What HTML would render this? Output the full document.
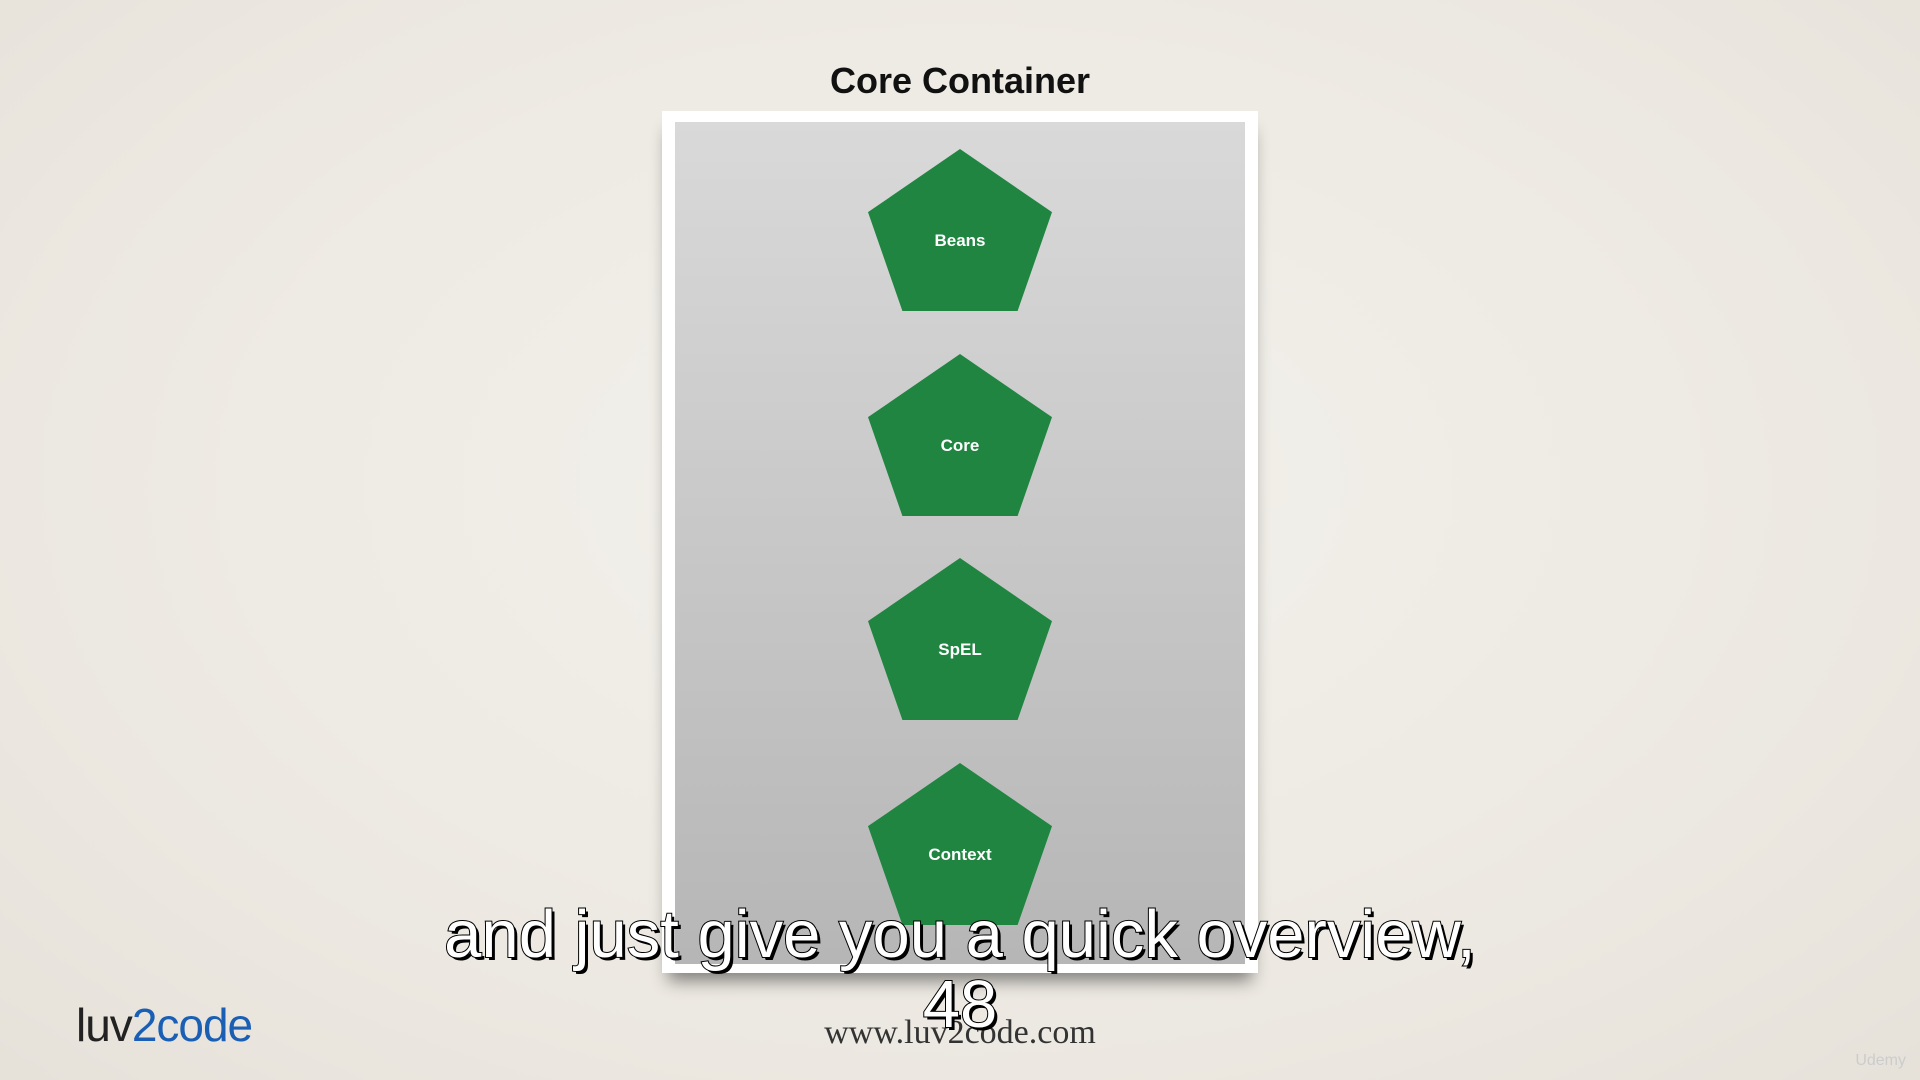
<!DOCTYPE html>
<html><head><meta charset="utf-8"><style>
html,body{margin:0;padding:0}
body{width:1920px;height:1080px;overflow:hidden;position:relative;background:radial-gradient(ellipse at 50% 45%,#f3f1ec 0%,#ece8e1 70%,#e6e2da 100%);font-family:"Liberation Sans",sans-serif}
.title{position:absolute;left:0;width:1920px;top:60px;text-align:center;font-weight:bold;font-size:36px;color:#111}
.frame{position:absolute;left:662px;top:111px;width:596px;height:862px;background:#fff;box-shadow:0 14px 16px -6px rgba(0,0,0,.45)}
.inner{position:absolute;left:13px;top:11px;width:570px;height:842px;background:linear-gradient(#d9d9d9,#b6b6b6)}
.pent{position:absolute;left:193px;width:184px;height:162px;background:#1f8541;clip-path:polygon(50% 0,100% 39%,81.3% 100%,18.7% 100%,0 39%)}
.pent span{position:absolute;left:0;right:0;top:82px;text-align:center;color:#fff;font-weight:bold;font-size:17px}
.sub{position:absolute;left:0;width:1920px;text-align:center;color:#fff;font-size:67px;letter-spacing:0;
-webkit-text-stroke:2px #000;paint-order:stroke fill;text-shadow:3px 3px 0 #000}
.www{position:absolute;left:0;width:1920px;top:1014px;text-align:center;font-family:"Liberation Serif",serif;font-size:34px;color:#333}
.logo{position:absolute;left:76px;top:998px;font-size:46px;color:#222;letter-spacing:-1px}
.logo b{font-weight:normal;color:#1a5fb4}
</style></head><body>
<div class="title">Core Container</div>
<div class="frame"><div class="inner">
<div class="pent" style="top:27px"><span>Beans</span></div>
<div class="pent" style="top:232px"><span>Core</span></div>
<div class="pent" style="top:436px"><span>SpEL</span></div>
<div class="pent" style="top:641px"><span>Context</span></div>
</div></div>
<div class="www">www.luv2code.com</div>
<div class="logo">luv<b>2code</b></div>
<div class="sub" style="top:896px">and just give you a quick overview,</div>
<div class="sub" style="top:966px">48</div>
<div style="position:absolute;right:14px;bottom:10px;color:#ccc;font-size:16px">Udemy</div>
</body></html>
